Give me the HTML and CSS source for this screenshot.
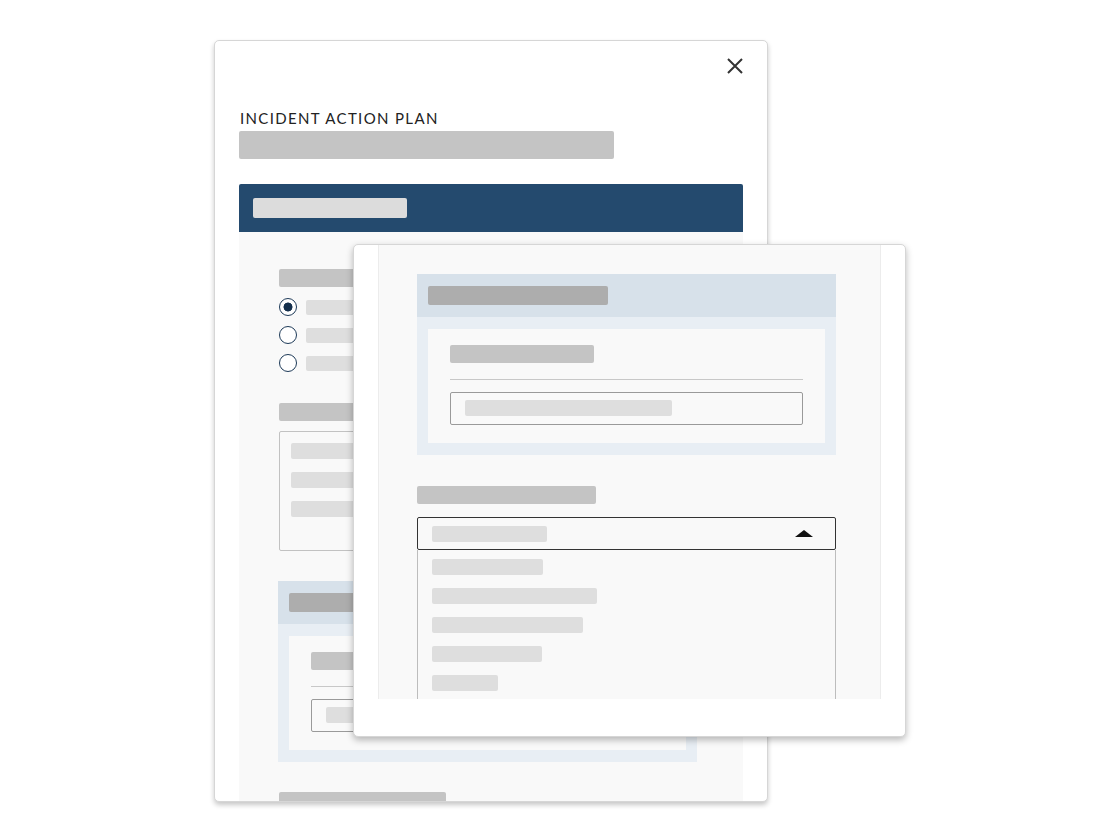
FILE: index.html
```html
<!DOCTYPE html>
<html lang="en">

<head>
    <meta charset="UTF-8">
    <meta name="viewport" content="width=device-width, initial-scale=1.0">
    <title>Incident Action Plan</title>
    <link rel="stylesheet" href="styles.css">
</head>

<body>
    <div class="desktop">

        <!-- back window: the plan form -->
        <section class="card card_back">
            <div class="close_row">
                <svg class="close_x" width="16" height="16" viewBox="0 0 16 16">
                    <path d="M1 1 L15 15 M15 1 L1 15" stroke="#333" stroke-width="2" fill="none" />
                </svg>
            </div>
            <h1 class="plan_title">INCIDENT ACTION PLAN</h1>
            <div class="bar title_bar"></div>

            <div class="dark_head">
                <div class="bar head_bar"></div>
            </div>

            <div class="back_body">
                <div class="bar label_bar"></div>
                <div class="radio_list">
                    <div class="radio_row"><span class="radio checked"></span><span class="bar opt_bar"></span></div>
                    <div class="radio_row"><span class="radio"></span><span class="bar opt_bar"></span></div>
                    <div class="radio_row"><span class="radio"></span><span class="bar opt_bar"></span></div>
                </div>

                <div class="bar label_bar label_2"></div>
                <div class="text_box">
                    <div class="bar line_bar"></div>
                    <div class="bar line_bar"></div>
                    <div class="bar line_bar"></div>
                </div>

                <div class="panel back_panel">
                    <div class="panel_head">
                        <div class="bar panel_head_bar"></div>
                    </div>
                    <div class="panel_body">
                        <div class="panel_inner">
                            <div class="bar inner_label"></div>
                            <div class="rule"></div>
                            <div class="input_box">
                                <div class="bar input_bar"></div>
                            </div>
                        </div>
                    </div>
                </div>

                <div class="bar label_bar last_bar"></div>
            </div>
        </section>

        <!-- front window: the open dropdown -->
        <section class="card card_front">
            <div class="front_scroll">
                <div class="panel">
                    <div class="panel_head">
                        <div class="bar panel_head_bar"></div>
                    </div>
                    <div class="panel_body">
                        <div class="panel_inner">
                            <div class="bar inner_label"></div>
                            <div class="rule"></div>
                            <div class="input_box">
                                <div class="bar input_bar"></div>
                            </div>
                        </div>
                    </div>
                </div>

                <div class="bar label_bar select_label"></div>
                <div class="select_box">
                    <div class="bar sel_bar"></div>
                    <span class="caret"></span>
                </div>
                <div class="drop_list">
                    <div class="bar item" style="width: 111px;"></div>
                    <div class="bar item" style="width: 165px;"></div>
                    <div class="bar item" style="width: 151px;"></div>
                    <div class="bar item" style="width: 110px;"></div>
                    <div class="bar item" style="width: 66px;"></div>
                </div>
            </div>
        </section>

    </div>
</body>

</html>
```

FILE: styles.css
```css
body {
    margin: 0;
    background-color: white;
    font-family: Lato, "Open Sans", sans-serif;
}

.desktop {
    position: relative;
    width: 1120px;
    height: 840px;
}

.card {
    position: absolute;
    box-sizing: border-box;
    background-color: white;
    border: 1px solid #d6d6d6;
    border-radius: 5px;
    overflow: hidden;
}

.bar {
    border-radius: 2px;
    background-color: #dedede;
    flex-shrink: 0;
}

/* back card */

.card_back {
    left: 214px;
    top: 40px;
    width: 554px;
    height: 762px;
    padding: 17px 24px 0 24px;
    display: flex;
    flex-direction: column;
    box-shadow: 0 3px 5px rgba(0, 0, 0, 0.22);
}

.card_back > * {
    flex-shrink: 0;
}

.close_row {
    display: flex;
    justify-content: flex-end;
    height: 16px;
}

.plan_title {
    margin: 35px 0 0 1px;
    font-size: 15px;
    line-height: 18px;
    font-weight: 400;
    letter-spacing: 1.35px;
    color: #222;
}

.title_bar {
    width: 375px;
    height: 28px;
    margin-top: 4px;
    background-color: #c4c4c4;
}

.dark_head {
    margin-top: 25px;
    height: 48px;
    box-sizing: border-box;
    padding: 14px;
    background-color: #244a6e;
    border-radius: 2px 2px 0 0;
}

.head_bar {
    width: 154px;
    height: 20px;
    background-color: #dcdcdc;
}

.back_body {
    flex: 1 0 auto;
    background-color: #f9f9f9;
    padding: 37px 44px 0 40px;
}

.label_bar {
    width: 150px;
    height: 18px;
    background-color: #c4c4c4;
}

.radio_list {
    margin-top: 11px;
    display: flex;
    flex-direction: column;
    gap: 10px;
}

.radio_row {
    display: flex;
    align-items: center;
    gap: 9px;
    height: 18px;
}

.radio {
    box-sizing: border-box;
    width: 18px;
    height: 18px;
    border: 1.8px solid #1e3a58;
    border-radius: 50%;
    background-color: white;
}

.radio.checked {
    background: radial-gradient(circle, #142f4c 0, #142f4c 4.2px, white 4.8px);
}

.opt_bar {
    width: 120px;
    height: 15px;
}

.label_2 {
    margin-top: 31px;
}

.text_box {
    margin-top: 10px;
    height: 120px;
    box-sizing: border-box;
    border: 1px solid #c2c2c2;
    border-radius: 2px;
    padding: 11px 11px;
    display: flex;
    flex-direction: column;
    gap: 13px;
}

.line_bar {
    width: 200px;
    height: 16px;
}

.back_panel {
    margin-top: 30px;
    margin-left: -1px;
}

.last_bar {
    margin-top: 30px;
    width: 167px;
}

/* panel shared by both cards */

.panel {
    width: 419px;
}

.panel_head {
    height: 43px;
    box-sizing: border-box;
    padding: 12px 11px;
    background-color: #d7e1ea;
}

.panel_head_bar {
    width: 180px;
    height: 19px;
    background-color: #adadad;
}

.panel_body {
    background-color: #e8eef4;
    padding: 12px 11px;
}

.panel_inner {
    background-color: #f9f9f9;
    padding: 16px 22px 18px 22px;
}

.inner_label {
    width: 144px;
    height: 18px;
    background-color: #c4c4c4;
}

.rule {
    margin-top: 16px;
    height: 1px;
    background-color: #c8c8c8;
}

.input_box {
    margin-top: 12px;
    height: 33px;
    box-sizing: border-box;
    border: 1px solid #9a9a9a;
    border-radius: 2px;
    padding: 7px 14px;
}

.input_bar {
    width: 207px;
    height: 16px;
}

/* front card */

.card_front {
    left: 353px;
    top: 244px;
    width: 553px;
    height: 493px;
    padding: 0 24px;
    box-shadow: 0 3px 7px rgba(0, 0, 0, 0.28);
}

.front_scroll {
    box-sizing: border-box;
    height: 454px;
    overflow: hidden;
    background-color: #f9f9f9;
    border-left: 1px solid #ececec;
    border-right: 1px solid #ececec;
    padding: 29px 44px 0 38px;
}

.select_label {
    margin-top: 31px;
    width: 179px;
}

.select_box {
    margin-top: 13px;
    width: 419px;
    height: 33px;
    box-sizing: border-box;
    border: 1.5px solid #333;
    border-radius: 2px;
    padding: 0 22px 0 14px;
    display: flex;
    align-items: center;
    justify-content: space-between;
    background-color: #f9f9f9;
}

.sel_bar {
    width: 115px;
    height: 16px;
}

.caret {
    width: 0;
    height: 0;
    border-left: 9px solid transparent;
    border-right: 9px solid transparent;
    border-bottom: 7px solid #111;
}

.drop_list {
    width: 419px;
    height: 200px;
    box-sizing: border-box;
    border-left: 1px solid #bdbdbd;
    border-right: 1px solid #bdbdbd;
    padding: 9px 14px;
    display: flex;
    flex-direction: column;
    gap: 13px;
}

.item {
    height: 16px;
}
```
